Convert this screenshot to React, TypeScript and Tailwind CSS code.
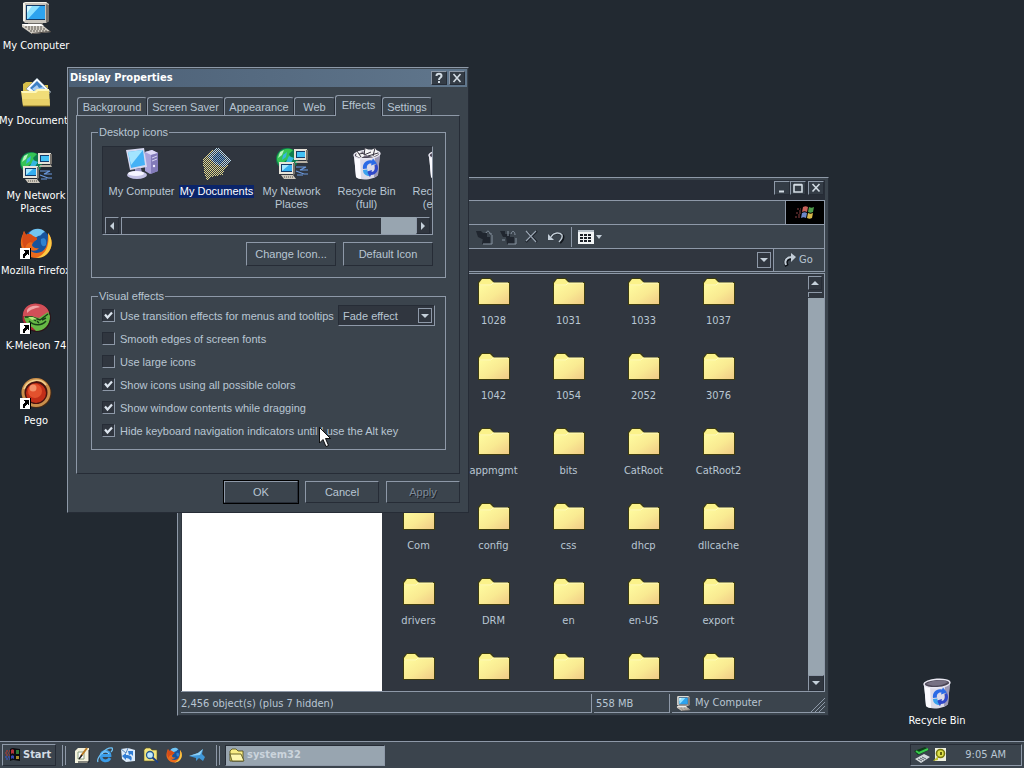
import type { ReactNode } from "react";

const tahoma = "font-['DejaVu_Sans_Condensed','DejaVu_Sans',sans-serif]";
const sans = "font-['Liberation_Sans',Arial,sans-serif]";
const raised = "border border-t-[#8e99a8] border-l-[#8e99a8] border-r-[#262c36] border-b-[#262c36]";
const sunken = "border border-t-[#262c36] border-l-[#262c36] border-r-[#8e99a8] border-b-[#8e99a8]";

type IconProps = { className?: string };

function ComputerIcon({ className = "size-8" }: IconProps) {
  return (
    <svg viewBox="0 0 32 32" className={className} aria-hidden="true">
      <path d="M3 1 L6 0 H26 L29 2 V19 L26 21 H5 L3 19Z" fill="#c9c5bd" />
      <path d="M3 1 L6 0 H26 L27 1 H5 V19 L3 19Z" fill="#f4f2ea" />
      <path d="M26 2 L29 3 V19 L26 21Z" fill="#77726c" />
      <rect x="6" y="3" width="19" height="15" fill="#123a66" />
      <rect x="7" y="4" width="18" height="13" fill="#2da3ee" />
      <path d="M7 4 H20 L8 17 H7Z" fill="#8ce0ff" />
      <path d="M7 4 H12 L7 11Z" fill="#d4f7ff" />
      <path d="M8 21 H23 V24 H8Z" fill="#6d6a66" />
      <path d="M2 22 H21 L31 30 L12 32 L2 25Z" fill="#d2cdc4" />
      <path d="M2 22 H21 L24 24 H5Z" fill="#fff" />
      <path d="M5 25 H22 M8 27 H25 M10 29 H28" stroke="#59544f" strokeWidth="1" strokeDasharray="2 1" />
      <path d="M12 31 L31 29 V30 L12 32Z" fill="#4b4642" />
    </svg>
  );
}

function TowerComputerIcon() {
  return (
    <svg viewBox="0 0 32 32" className="size-8" aria-hidden="true">
      <path d="M19 4 L26 2 L32 5 V23 L24 26 L19 23Z" fill="#a9a2da" />
      <path d="M19 4 L26 2 L32 5 L25 7Z" fill="#dedaf7" />
      <path d="M25 7 L32 5 V23 L25 26Z" fill="#827bb9" />
      <path d="M26 10 L31 8 M26 13 L31 11" stroke="#d8d5f4" />
      <circle cx="28" cy="18" r="1.2" fill="#efedff" />
      <path d="M0 2 L18 0 L21 19 L4 22Z" fill="#d7d9f1" />
      <path d="M2 4 L17 2 L19 17 L5 20Z" fill="#45b1f5" />
      <path d="M2 4 L17 2 L5 17Z" fill="#a4e4ff" />
      <path d="M9 21 L15 20 L16 25 H9Z" fill="#9c99c8" />
      <ellipse cx="11" cy="27" rx="10" ry="4" fill="#c3c2e4" />
      <ellipse cx="10" cy="25.5" rx="8" ry="2.6" fill="#f5f5ff" />
    </svg>
  );
}

function DocumentsIcon() {
  return (
    <svg viewBox="0 0 32 32" className="size-8" aria-hidden="true">
      <path d="M3 10 V7 L6 5 H12 L14 8 H28 V14 H3Z" fill="#d8bf4a" />
      <path d="M17 1 L31 15 L22 23 L6 12Z" fill="#f6fbff" stroke="#6c7c8c" strokeWidth="0.6" />
      <path d="M17 4 L26 13 L20 19 L10 11Z" fill="#3b7fc4" />
      <path d="M12 12 L17 8 L19 11 L23 10 L25 14 L20 18Z" fill="#a9cdf0" />
      <path d="M31 15 L28 18 V14Z" fill="#5a6470" />
      <path d="M1 14 H15 L17 12 H29 L30 29 H3Z" fill="#f1dd78" />
      <path d="M1 14 H15 L17 12 H29 V14 H18 L16 16 H2Z" fill="#fff8b8" />
      <path d="M3 29 L2 22 H30 L29 29Z" fill="#e5c95e" opacity=".6" />
      <path d="M3 29 H30" stroke="#8b7424" />
    </svg>
  );
}

function SelectedDocumentsIcon() {
  return (
    <svg viewBox="0 0 32 32" className="size-8" shapeRendering="crispEdges" aria-hidden="true">
      <defs>
        <pattern id="halftone" width="2" height="2" patternUnits="userSpaceOnUse">
          <rect width="1" height="1" fill="#2c3744" />
          <rect x="1" y="1" width="1" height="1" fill="#2c3744" />
        </pattern>
      </defs>
      <path d="M2 12 L9 4 L15 0 H19 L25 8 L30 13 L24 21 L22 27 L13 28 L6 32 L3 24Z" fill="#e2d488" />
      <path d="M6 9 L15 0 H19 L25 8 L30 13 L24 20 L14 16Z" fill="#bcd6e4" />
      <path d="M11 9 L17 4 L24 11 L19 16 L13 13Z" fill="#6aa2dc" />
      <path d="M2 12 L9 4 L15 0 H19 L25 8 L30 13 L24 21 L22 27 L13 28 L6 32 L3 24Z" fill="url(#halftone)" />
    </svg>
  );
}

function NetworkIcon() {
  return (
    <svg viewBox="0 0 32 32" className="size-8" aria-hidden="true">
      <circle cx="11" cy="11" r="11" fill="#0d7c4e" />
      <path d="M3 5 C7 0 13 0 17 2 L13 6 L15 10 L9 13 L5 18 C0 14 0 9 3 5Z" fill="#35c455" />
      <path d="M7 7 L11 4 L10 9 L6 12Z M13 8 L18 10 L14 16 L10 14Z" fill="#35b7df" />
      <path d="M4 4 L8 2 L6 7 L2 10Z" fill="#b8f3c0" />
      <rect x="18" y="1" width="13" height="11" fill="#e6e2d8" />
      <path d="M30 2 H32 V12 L30 13Z" fill="#77726c" />
      <rect x="20" y="3" width="9" height="7" fill="#143b6a" />
      <rect x="21" y="4" width="8" height="5" fill="#42c1f5" />
      <path d="M20 13 H31 L32 15 H19Z" fill="#bab3a6" />
      <rect x="3" y="14" width="15" height="12" fill="#e9e5da" />
      <path d="M17 15 H19 V26 L17 27Z" fill="#77726c" />
      <rect x="5" y="16" width="11" height="8" fill="#143b6a" />
      <rect x="6" y="17" width="10" height="6" fill="#35aef0" />
      <path d="M6 17 H13 L6 23Z" fill="#a4e8ff" />
      <path d="M5 27 H17 L20 31 H8Z" fill="#cdc7bc" />
      <path d="M8 29 H18" stroke="#55504b" strokeDasharray="1 1" />
      <path d="M20 19 H30 L24 22 H32 M20 23 L28 26 H32 M21 27 H27" fill="none" stroke="#6b9ae0" strokeWidth="1.2" />
    </svg>
  );
}

function RecycleBinIcon({ full = false }: { full?: boolean }) {
  return (
    <svg viewBox="0 0 32 32" className="size-8" aria-hidden="true">
      <path d="M3 7 L29 5 L27 27 C23 32 9 33 5 29Z" fill="#dcdbe8" />
      <path d="M3 7 L9 9 L10 31 C8 31 6 30 5 29Z" fill="#fbfbff" />
      <path d="M24 8 L29 5 L27 27 L23 30Z" fill="#9c98b4" />
      <ellipse cx="16" cy="6.5" rx="13" ry="4.2" fill="#4c4757" stroke="#e9e8f2" strokeWidth="1.4" transform="rotate(-4 16 6.5)" />
      <path d="M5 7 C11 3 21 2 27 5 C22 9 12 10 5 7Z" fill="#777183" />
      {full && (
        <>
          <path d="M5 8 L6 3 L12 5 L14 0 L19 3 L24 0 L28 6 L22 9 L15 7 L10 10Z" fill="#f5f5f5" />
          <path d="M6 3 L10 9 M14 0 L13 7 L20 4 M24 0 L22 8 M8 6 L14 5 M17 8 L27 5" fill="none" stroke="#37333f" />
        </>
      )}
      <path d="M12 21 C11 15 16 11 21 12.5 L22 10.5 L26 15.5 L20 17.5 L20.5 15.5 C17 15 15.5 17.5 16 20.5Z" fill="#2b6be6" />
      <path d="M26 16 C29 22 25 27 20 27 L19 29 L14.5 24 L21 22 L20.5 24 C23 24 25 21 23.5 17.5Z" fill="#3048c8" />
      <path d="M12 22 L16.5 21.5 C16 24 17 26 18.5 28 C14.5 28 12 25.5 12 22Z" fill="#3ba3ee" />
    </svg>
  );
}

function FirefoxIcon({ className = "size-8" }: IconProps) {
  return (
    <svg viewBox="0 0 32 32" className={className} aria-hidden="true">
      <circle cx="17" cy="15" r="13" fill="#17539d" />
      <path d="M9 6 C13 1 21 0 25 5 C22 5 22 9 18 9 C15 12 11 10 9 6Z" fill="#72c4f2" />
      <path d="M21 12 C25 10 27 13 26 18 C23 21 20 18 21 12Z" fill="#2e82d0" />
      <path d="M28 6 C33 12 33 21 27 27 C20 33 9 32 4 25 C0 20 0 13 3 7 L4 4 L6 8 C9 6 11 7 13 9 L17 11 C17 14 14 13 13 16 C10 19 15 22 19 21 C16 25 11 24 9 22 C13 28 23 27 26 20 C28 15 28 10 28 6Z" fill="#ea6a1c" />
      <path d="M28 6 C33 12 33 21 27 27 C24 30 20 31 16 31 C26 28 30 18 28 6Z" fill="#fbcb45" />
      <path d="M4 4 L6 8 C9 6 11 7 13 9 L17 11 C17 14 14 13 13 16 C10 14 6 17 5 22 C1 15 2 9 4 4Z" fill="#d54c18" />
    </svg>
  );
}

function KMeleonIcon() {
  return (
    <svg viewBox="0 0 32 32" className="size-8" aria-hidden="true">
      <circle cx="17" cy="16" r="14" fill="#2b1418" />
      <circle cx="16" cy="15" r="13.5" fill="#a92835" />
      <path d="M3 14 C3 5 10 1 17 2 C24 2 29 7 29 11 L20 16Z" fill="#d14f58" />
      <path d="M7 8 C10 3 17 3 20 5 C16 6 11 7 7 11Z" fill="#f0a3a5" />
      <path d="M4 15 L11 14 L19 16 L28 10 L30 14 C30 23 24 29 16 29 L12 25 C8 24 5 20 4 15Z" fill="#67b845" />
      <path d="M5 15 L12 15 L20 18 L28 12 M9 19 C14 24 22 24 26 19 M17 19 L19 21 M13 17 L16 19 M22 18 L26 16" fill="none" stroke="#173d18" strokeWidth="1.4" />
      <path d="M8 15 L13 15 L17 17 L12 18Z" fill="#b6e879" />
    </svg>
  );
}

function PegoIcon() {
  return (
    <svg viewBox="0 0 32 32" className="size-8" aria-hidden="true">
      <circle cx="16.5" cy="16" r="15" fill="#4a2a14" />
      <circle cx="16" cy="15.5" r="13" fill="#471310" stroke="#c98f4c" strokeWidth="3" />
      <path d="M4 12 C7 3 20 0 26 8" fill="none" stroke="#f2cf8d" strokeWidth="1.6" />
      <circle cx="16" cy="16" r="10" fill="#c22f18" />
      <circle cx="15" cy="14" r="7" fill="#e3512d" />
      <circle cx="13" cy="11" r="3.5" fill="#f39068" />
    </svg>
  );
}

function ShortcutArrow() {
  return (
    <svg viewBox="0 0 11 11" className="absolute bottom-0 left-0 size-[11px]" shapeRendering="crispEdges" aria-hidden="true">
      <rect width="11" height="11" fill="#000" />
      <rect width="10" height="11" fill="#fff" />
      <path d="M3 2 H9 V7 H8 L7 6 L5 8 V10 H3 V7 L5 4Z" fill="#000" />
    </svg>
  );
}

function FolderIcon() {
  return (
    <svg viewBox="0 0 34 32" className="h-8 w-[34px]" aria-hidden="true">
      <defs>
        <linearGradient id="folder" x1="0" y1="0" x2="1" y2="1">
          <stop offset="0" stopColor="#fffda0" />
          <stop offset=".55" stopColor="#f9ea92" />
          <stop offset="1" stopColor="#f0ca86" />
        </linearGradient>
      </defs>
      <path d="M1 6 L5 2 H14 L17 6 H33 V29 H1Z" fill="#3d3c10" />
      <path d="M2 7 L5 3 H13 L17 7 H32 V10 H2Z" fill="#fbf28a" />
      <path d="M2 10 H14 L16 7 H32 V28 H2Z" fill="url(#folder)" />
      <path d="M3 9 H14 L16 7 H31" stroke="#fffbc4" fill="none" />
    </svg>
  );
}

function WindowsFlag({ className }: IconProps) {
  return (
    <svg viewBox="0 0 20 16" className={className} aria-hidden="true">
      <path d="M8 2 C10 1 11 1 13 2 L12 7 C10 6 9 6 7 7Z" fill="#c8625a" />
      <path d="M14 2 C16 3 17 3 19 2 L18 7 C16 8 15 8 13 7Z" fill="#4f9e4c" />
      <path d="M7 8 C9 7 10 7 12 8 L11 13 C9 12 8 12 6 13Z" fill="#6c86c8" />
      <path d="M13 8 C15 9 16 9 18 8 L17 13 C15 14 14 14 12 13Z" fill="#d8b84a" />
      <path d="M2 4 H6 M4 6 H7 M1 8 H6 M3 10 H6 M0 12 H5" stroke="#8a4142" strokeDasharray="2 1" />
    </svg>
  );
}

function Arrow({ direction }: { direction: "up" | "down" | "left" | "right" }) {
  const paths = { up: "M0 6 L4 2 L8 6Z", down: "M0 2 H8 L4 6Z", left: "M6 0 V8 L2 4Z", right: "M2 0 L6 4 L2 8Z" };
  return (
    <svg viewBox="0 0 8 8" className="size-2" aria-hidden="true">
      <path d={paths[direction]} fill="#c5d0da" />
    </svg>
  );
}

function CaptionButton({ label, children }: { label: string; children: ReactNode }) {
  return (
    <button aria-label={label} className={`flex h-[14px] w-4 items-center justify-center ${raised} bg-[#343c46]`}>
      <svg viewBox="0 0 12 12" className="size-3" fill="none" stroke="#d3dce4" strokeWidth="1.6" aria-hidden="true">
        {children}
      </svg>
    </button>
  );
}

function DesktopIcon({ label, icon, shortcut, nowrap = true }: { label: string; icon: ReactNode; shortcut?: boolean; nowrap?: boolean }) {
  return (
    <button className="flex h-[75px] w-[72px] flex-col items-center gap-[5px] pt-[2px] text-white">
      <span className="relative block size-8">
        {icon}
        {shortcut && <ShortcutArrow />}
      </span>
      <span className={`leading-[13px] ${nowrap ? "whitespace-nowrap" : ""}`}>{label}</span>
    </button>
  );
}

const folderRows: (string | null)[][] = [
  [null, "1028", "1031", "1033", "1037"],
  [null, "1042", "1054", "2052", "3076"],
  [null, "appmgmt", "bits", "CatRoot", "CatRoot2"],
  ["Com", "config", "css", "dhcp", "dllcache"],
  ["drivers", "DRM", "en", "en-US", "export"],
  ["hotfix", "ras", "inetsrv", "mui", "npp"],
];

function Explorer() {
  return (
    <section aria-label="system32" className={`absolute top-[177px] left-[177px] w-[652px] ${raised} bg-[#3b444d] px-[3px] pt-[2px] pb-[2px] text-[#b9c6d3]`}>
      <div className="flex h-5 items-center justify-end bg-[#282e38] pr-px pb-1">
        <CaptionButton label="Minimize"><path d="M3 9.5 H8" strokeWidth="2" /></CaptionButton>
        <CaptionButton label="Maximize"><path d="M2 3 H10 V10 H2Z M2 2.5 H10" /></CaptionButton>
        <span className="w-[2px]" />
        <CaptionButton label="Close"><path d="M2.5 2 L9.5 9.5 M9.5 2 L2.5 9.5" /></CaptionButton>
      </div>
      <div className="border-r border-[#8e99a8]">
        <div className="flex h-6 justify-end border-t border-[#8e99a8]">
          <div className="flex w-[39px] items-center justify-center border-l border-[#8e99a8] bg-black">
            <WindowsFlag className="h-4 w-5" />
          </div>
        </div>
        <div className="flex h-6 items-center gap-[6px] border-t border-[#8e99a8] pl-[294px]">
          <button aria-label="Move to">
            <svg viewBox="0 0 18 18" className="size-[18px]" aria-hidden="true">
              <path d="M1 3 H6 L8 5 H12 V11 H7 L3 9Z M8 9 H15 V16 H7Z" fill="#20262f" />
              <path d="M11 5 C12 2 15 3 15 6 L17 6 M17 7 V16 H8" fill="none" stroke="#8793a1" />
            </svg>
          </button>
          <button aria-label="Copy to">
            <svg viewBox="0 0 18 18" className="size-[18px]" aria-hidden="true">
              <path d="M1 3 H6 V6 H11 V9 H4Z M7 9 H15 V16 H8Z" fill="#20262f" />
              <path d="M9 3 V8 M12 6 C13 2 16 3 16 7 M3 12 H6 M17 10 V16 H9" fill="none" stroke="#8793a1" />
            </svg>
          </button>
          <button aria-label="Delete">
            <svg viewBox="0 0 18 18" className="size-[18px]" fill="none" aria-hidden="true">
              <path d="M4 4 L14 14 M14 3 L3 14" stroke="#1c2129" strokeWidth="2.2" />
              <path d="M3 3 L13 14 M13 3 L3 13" stroke="#9aa6b3" strokeWidth="1.2" />
            </svg>
          </button>
          <button aria-label="Undo">
            <svg viewBox="0 0 18 18" className="size-[18px]" fill="none" aria-hidden="true">
              <path d="M4 9 C7 4 14 4 16 8 C17 11 15 13 13 15" stroke="#11161c" strokeWidth="2.4" />
              <path d="M4 9 C7 4 13 4 15 7 C16 10 14 12 12 14" stroke="#c3ced8" strokeWidth="1.4" />
              <path d="M1 6 V12 H7Z" fill="#c3ced8" />
            </svg>
          </button>
          <span className="h-5 w-px bg-[#8e99a8]" />
          <button aria-label="Views" className="flex items-center gap-[2px]">
            <svg viewBox="0 0 16 14" className="h-[14px] w-4" shapeRendering="crispEdges" aria-hidden="true">
              <rect width="16" height="14" fill="#f1f4f6" />
              <rect width="16" height="2" fill="#b6c0ca" />
              <path d="M2 5 H14 M2 8 H14 M2 11 H14" stroke="#1b2028" strokeWidth="2" strokeDasharray="3 1" />
            </svg>
            <svg viewBox="0 0 6 4" className="h-1 w-[6px]" aria-hidden="true"><path d="M0 0 H6 L3 4Z" fill="#c5d0da" /></svg>
          </button>
        </div>
        <div className="flex h-6 border-y border-[#8e99a8]">
          <div className="flex flex-1 items-center border-r border-[#8e99a8] bg-[#30363f] pr-[2px]">
            <input aria-label="Address" className="h-full min-w-0 flex-1 bg-transparent" />
            <button aria-label="Show addresses" className="flex h-4 w-[14px] items-center justify-center border border-[#8e99a8]"><Arrow direction="down" /></button>
          </div>
          <button className="flex w-[50px] items-center gap-[2px] pl-[9px]">
            <svg viewBox="0 0 14 14" className="size-[14px]" fill="none" aria-hidden="true">
              <path d="M4 13 C1 8 4 5 9 5" stroke="#0d1116" strokeWidth="4" />
              <path d="M3 12 C1 7 4 4 9 4" stroke="#c3ced8" strokeWidth="2" />
              <path d="M8 0 L13 4 L8 9Z" fill="#c3ced8" />
            </svg>
            Go
          </button>
        </div>
      </div>
      <div className="mt-px flex h-[419px] overflow-hidden border-r border-y border-[#8e99a8] bg-[#30363f]">
        <div className="ml-px w-[200px] bg-white" />
        <div className="grid flex-1 auto-rows-[75px] grid-cols-[repeat(5,75px)]">
          {folderRows.flat().map((name, index) =>
            name ? (
              <button key={index} className="flex flex-col items-center gap-[6px] pt-[2px] pr-[2px]">
                <FolderIcon />
                <span className="leading-[14px]">{name}</span>
              </button>
            ) : (
              <span key={index} />
            ),
          )}
        </div>
        <div className="flex w-4 flex-col bg-[#98a5b0]">
          <div className="bg-[#30363f] pt-[2px] pb-px">
            <button aria-label="Scroll up" className={`flex h-[14px] w-[14px] items-center justify-center ${raised}`}><Arrow direction="up" /></button>
            <div className="mt-[2px] h-[5px] w-[14px] border-t border-l border-[#8e99a8]" />
          </div>
          <div className="flex-1" />
          <button aria-label="Scroll down" className={`flex h-4 w-4 items-center justify-center ${raised} bg-[#30363f]`}><Arrow direction="down" /></button>
        </div>
      </div>
      <div className="flex h-[21px] items-stretch gap-[2px] pt-[2px] leading-5">
        <div className="flex-1 border-r border-b border-[#8e99a8]">2,456 object(s) (plus 7 hidden)</div>
        <div className="w-[76px] border-r border-b border-[#8e99a8] pl-[2px]">558 MB</div>
        <div className="flex w-[153px] items-center gap-1 border-b border-[#8e99a8] pl-1">
          <ComputerIcon className="size-[15px]" />
          <span className="flex-1">My Computer</span>
          <svg viewBox="0 0 14 16" className="h-4 w-[14px] self-end" stroke="#8e99a8" aria-hidden="true"><path d="M0 16 L14 2 M4 16 L14 6 M8 16 L14 10" /></svg>
        </div>
      </div>
    </section>
  );
}

const tabs = [
  { label: "Background", size: "w-[70px]" },
  { label: "Screen Saver", size: "w-[77px]" },
  { label: "Appearance", size: "w-[70px]" },
  { label: "Web", size: "w-[41px]" },
  { label: "Effects", size: "w-[47px]" },
  { label: "Settings", size: "w-[50px]" },
];

const listIcons = [
  { label: "My Computer", icon: <TowerComputerIcon /> },
  { label: "My Documents", icon: <SelectedDocumentsIcon />, selected: true },
  { label: "My Network Places", icon: <NetworkIcon /> },
  { label: "Recycle Bin (full)", icon: <RecycleBinIcon full /> },
  { label: "Recycle Bin (empty)", icon: <RecycleBinIcon /> },
];

const options = [
  { label: "Use transition effects for menus and tooltips", checked: true, effect: true },
  { label: "Smooth edges of screen fonts", checked: false },
  { label: "Use large icons", checked: false },
  { label: "Show icons using all possible colors", checked: true },
  { label: "Show window contents while dragging", checked: true },
  { label: "Hide keyboard navigation indicators until I use the Alt key", checked: true },
];

function Option({ label, checked }: { label: string; checked: boolean }) {
  return (
    <label className="flex items-center gap-[5px] whitespace-nowrap">
      <span className="grid size-[13px] *:col-start-1 *:row-start-1">
        <input type="checkbox" defaultChecked={checked} className={`peer size-[13px] appearance-none ${sunken} bg-[#30363f]`} />
        <svg viewBox="0 0 13 13" className="pointer-events-none invisible size-[13px] peer-checked:visible" fill="none" stroke="#dce5ee" strokeWidth="2.2" aria-hidden="true">
          <path d="M3 5.5 L5.5 8.5 L10 3.5" />
        </svg>
      </span>
      {label}
    </label>
  );
}

function DisplayProperties() {
  return (
    <section aria-label="Display Properties" className={`absolute top-[67px] left-[67px] w-[402px] ${raised} bg-[#3b444d] p-px text-[#b9c6d3] ${sans}`}>
      <div className={`flex h-[18px] items-center bg-linear-to-r from-[#4c6076] to-[#60768c] pr-[2px] pl-px text-white ${tahoma}`}>
        <h1 className="flex-1 font-bold">Display Properties</h1>
        <CaptionButton label="Help"><path d="M3.5 4 C3.5 1 8.5 1 8.5 4 C8.5 5.5 6 5.5 6 8 M6 9 V11" strokeWidth="2" /></CaptionButton>
        <span className="w-[2px]" />
        <CaptionButton label="Close"><path d="M2.5 2 L9.5 10 M9.5 2 L2.5 10" /></CaptionButton>
      </div>
      <div className="px-[7px] pt-2 pb-2">
        <div role="tablist" className="flex h-5 items-end pl-px">
          {tabs.map(({ label, size }) => {
            const active = label === "Effects";
            return (
              <button
                key={label}
                role="tab"
                aria-selected={active}
                className={`${size} rounded-t-[3px] border-t border-r border-l border-t-[#8e99a8] border-r-[#262c36] border-l-[#8e99a8] ${active ? "relative -mb-px h-[21px] bg-[#3b444d] pb-[2px]" : "h-[18px]"}`}
              >
                {label}
              </button>
            );
          })}
        </div>
        <div role="tabpanel" className={`${raised} pt-[9px] pr-[13px] pb-[23px] pl-[14px]`}>
          <fieldset className="min-w-0 border border-[#8e99a8] pr-3 pb-[11px] pl-[10px]">
            <legend className="-ml-1 px-px leading-[14px]">Desktop icons</legend>
            <div className={`mt-[7px] ${sunken} bg-[#30363f]`}>
              <div className="flex h-[70px] overflow-hidden pl-px">
                {listIcons.map(({ label, icon, selected }) => (
                  <div key={label} className="flex w-[75px] shrink-0 flex-col items-center gap-[5px] pt-px text-center leading-[13px]">
                    {icon}
                    <span className={selected ? "bg-[#0a246a] px-px whitespace-nowrap text-white" : label === "My Computer" ? "whitespace-nowrap" : "px-2"}>{label}</span>
                  </div>
                ))}
              </div>
              <div className="flex h-[17px] items-stretch px-[2px]">
                <button aria-label="Scroll left" className={`flex w-[14px] items-center justify-center ${raised}`}><Arrow direction="left" /></button>
                <div className="ml-[2px] flex-1 border-t border-l border-[#8e99a8]" />
                <div className="w-[35px] bg-[#98a5b0]" />
                <button aria-label="Scroll right" className={`flex w-[14px] items-center justify-center ${raised}`}><Arrow direction="right" /></button>
              </div>
            </div>
            <div className="mt-[7px] flex justify-end gap-[7px]">
              <button className={`h-6 w-[90px] ${raised}`}>Change Icon...</button>
              <button className={`h-6 w-[90px] ${raised}`}>Default Icon</button>
            </div>
          </fieldset>
          <fieldset className="mt-[11px] min-w-0 border border-[#8e99a8] px-[10px] pb-[7px]">
            <legend className="-ml-1 px-px leading-[14px]">Visual effects</legend>
            <div className="pt-px">
              {options.map(({ label, checked, effect }) => (
                <div key={label} className="flex h-[23px] items-center justify-between">
                  <Option label={label} checked={checked} />
                  {effect && (
                    <div className="grid h-[21px] w-[97px] *:col-start-1 *:row-start-1">
                      <select aria-label="Transition effect" className={`appearance-none ${sunken} bg-[#30363f] pl-1`}>
                        <option>Fade effect</option>
                      </select>
                      <span className="pointer-events-none mr-[3px] flex h-[15px] w-[14px] items-center justify-center self-center justify-self-end border border-[#8e99a8]">
                        <Arrow direction="down" />
                      </span>
                    </div>
                  )}
                </div>
              ))}
            </div>
          </fieldset>
        </div>
        <div className="mt-[7px] flex justify-end gap-[7px]">
          <button className={`h-[22px] w-[74px] ${raised} outline outline-black`}>OK</button>
          <button className={`h-[22px] w-[74px] ${raised}`}>Cancel</button>
          <button disabled className={`h-[22px] w-[74px] ${raised} text-[#7f8b99] [text-shadow:1px_1px_#1c2129]`}>Apply</button>
        </div>
      </div>
    </section>
  );
}

function PadIcon() {
  return (
    <svg viewBox="0 0 16 16" className="size-4" aria-hidden="true">
      <path d="M1 4 L4 1 H15 V14 L13 16 H1Z" fill="#f3f1dc" />
      <path d="M15 3 V15 H4" fill="none" stroke="#171b20" />
      <path d="M4 5 H10 V12 H4Z" fill="#fff" stroke="#8aa080" />
      <path d="M7 9 L13 1" stroke="#b77a24" strokeWidth="2" />
      <path d="M5 12 L8 8" stroke="#1d1d1d" strokeWidth="1.4" />
    </svg>
  );
}

function ExplorerIcon() {
  return (
    <svg viewBox="0 0 16 16" className="size-4" fill="none" aria-hidden="true">
      <path d="M13 11 C11 15 4 15 4 9 C4 3 13 3 13 8.5 H5" stroke="#3a9ce8" strokeWidth="2.8" />
      <path d="M5 7 C6 4 11 4 12 7" stroke="#a5dcff" />
      <path d="M1 15 C-1 11 9 0 15 1 C16 2 15 4 14 5" stroke="#6cc0f5" strokeWidth="1.3" />
    </svg>
  );
}

function MailIcon() {
  return (
    <svg viewBox="0 0 16 16" className="size-4" aria-hidden="true">
      <path d="M1 2 L8 1 L15 3 V14 L6 15 L2 12Z" fill="#dcebfa" />
      <path d="M1 2 L6 6 L8 1" fill="none" stroke="#5c88b8" />
      <path d="M2 9 L6 6 V8 C11 8 13 10 11 14 C10 12 8 11 6 11 V13Z" fill="#2f7cd4" />
      <path d="M8 4 H13 V9 L11 7 L9 8Z" fill="#2f7cd4" />
    </svg>
  );
}

function SearchIcon() {
  return (
    <svg viewBox="0 0 16 16" className="size-4" aria-hidden="true">
      <path d="M1 3 L3 1 H7 L9 3 H14 V14 H1Z" fill="#f4e67f" stroke="#5f5718" strokeWidth=".6" />
      <circle cx="7" cy="8" r="3.5" fill="#bfe9ff" stroke="#24598f" strokeWidth="1.3" />
      <path d="M9.5 10.5 L15 15.5" stroke="#1c3f86" strokeWidth="2" />
    </svg>
  );
}

function PlaneIcon() {
  return (
    <svg viewBox="0 0 16 16" className="size-4" aria-hidden="true">
      <path d="M0 9 L9 6 L14 2 L13 7 L16 10 L14 14 L10 11 L7 14 L7 11Z" fill="#3f97d8" />
      <path d="M0 9 L9 6 L14 2 L11 8Z" fill="#8fd0f5" />
    </svg>
  );
}

const quickLaunch = [
  { label: "Show Desktop", icon: <PadIcon /> },
  { label: "Internet Explorer", icon: <ExplorerIcon /> },
  { label: "Outlook Express", icon: <MailIcon /> },
  { label: "Search", icon: <SearchIcon /> },
  { label: "Mozilla Firefox", icon: <FirefoxIcon className="size-4" /> },
  { label: "Messenger", icon: <PlaneIcon /> },
];

function Grip() {
  return (
    <span className="flex h-[21px] gap-[2px]">
      <span className="w-px bg-[#8e99a8]" />
      <span className="my-px w-[2px] border-l border-[#8e99a8]" />
    </span>
  );
}

function Taskbar() {
  return (
    <footer className="flex h-[27px] items-center border-t border-[#8e99a8] bg-[#3b444d] px-[2px] text-[#b9c6d3]">
      <button className={`flex h-[22px] w-[54px] items-center gap-[2px] pl-[2px] ${raised} text-[#d3dce4]`}>
        <svg viewBox="0 0 16 16" className="size-4" aria-hidden="true">
          <path d="M5 2 C8 0 11 2 15 2 V14 C11 14 9 12 5 14Z" fill="#0b0d10" />
          <path d="M6 3 C7 2 8 2 9 3 V7 C8 6 7 6 6 7Z" fill="#b3343c" />
          <path d="M11 3 L14 3 V7 L11 7Z" fill="#2f7a36" />
          <path d="M6 9 C7 8 8 8 9 9 V12 C8 11 7 11 6 12Z" fill="#3748b6" />
          <path d="M11 9 H14 V12 L11 12Z" fill="#a98b30" />
          <path d="M1 4 H5 M0 6 H4 M1 8 H5" stroke="#c03a35" strokeDasharray="2 1" />
          <path d="M0 10 H5 M1 12 H5" stroke="#3c59d8" strokeDasharray="2 1" />
        </svg>
        <span className="font-bold">Start</span>
      </button>
      <div className="ml-[6px] flex items-center">
        <Grip />
        <nav aria-label="Quick Launch" className="ml-[7px] flex gap-[7px]">
          {quickLaunch.map(({ label, icon }) => (
            <button key={label} aria-label={label}>{icon}</button>
          ))}
        </nav>
      </div>
      <div className="ml-[11px] flex items-center">
        <Grip />
        <button className={`ml-1 flex h-[21px] w-[160px] items-center gap-[2px] bg-[#98a5b0] pl-[3px] font-bold text-[#cbd4dc] ${sunken}`}>
          <svg viewBox="0 0 16 14" className="h-[14px] w-4" aria-hidden="true">
            <path d="M1 3 L3 1 H7 L9 3 H14 V13 H1Z" fill="#f7ec86" stroke="#4d480f" strokeWidth=".8" />
            <path d="M1 6 H12 L15 13 H3Z" fill="#fdf7b0" stroke="#4d480f" strokeWidth=".8" />
          </svg>
          system32
        </button>
      </div>
      <div className={`ml-auto flex h-[22px] w-[112px] items-center gap-[2px] pl-[3px] ${sunken}`}>
        <svg viewBox="0 0 16 16" className="size-4" aria-hidden="true">
          <path d="M0 4 L11 0 L15 3 L4 8Z" fill="#0d3d19" />
          <path d="M2 4 L5 6 L14 2" fill="none" stroke="#38c94b" strokeWidth="2" />
          <path d="M1 12 L10 7 L16 10 L7 16Z" fill="#d5dadd" />
          <path d="M4 12 L8 14 M6 11 L10 13 M8 10 L12 12" stroke="#59636c" />
        </svg>
        <svg viewBox="0 0 16 16" className="size-4" aria-hidden="true">
          <path d="M3 1 H14 V14 H3Z" fill="#eef0df" />
          <circle cx="8.5" cy="6.5" r="4" fill="#dfe04a" stroke="#77780f" strokeWidth="1.6" />
          <path d="M8 5 H10 V8 H8Z" fill="#62630e" />
          <path d="M1 14 L6 9 V13Z" fill="#c2c42f" />
        </svg>
        <time className="ml-auto pr-[15px]">9:05 AM</time>
      </div>
    </footer>
  );
}

export default function App() {
  return (
    <div className={`flex min-h-screen flex-col overflow-hidden bg-[#222931] text-[11px] leading-[14px] ${tahoma}`}>
      <main className="relative flex-1">
        <div className="flex flex-col items-start">
          <DesktopIcon label="My Computer" icon={<ComputerIcon />} />
          <DesktopIcon label="My Documents" icon={<DocumentsIcon />} />
          <DesktopIcon label="My Network Places" icon={<NetworkIcon />} nowrap={false} />
          <DesktopIcon label="Mozilla Firefox" icon={<FirefoxIcon />} shortcut />
          <DesktopIcon label="K-Meleon 74" icon={<KMeleonIcon />} shortcut />
          <DesktopIcon label="Pego" icon={<PegoIcon />} shortcut />
        </div>
        <div className="absolute top-[675px] left-[901px]">
          <DesktopIcon label="Recycle Bin" icon={<RecycleBinIcon />} />
        </div>
        <Explorer />
        <DisplayProperties />
        <svg viewBox="0 0 12 20" className="pointer-events-none absolute top-[427px] left-[319px] h-5 w-3" aria-hidden="true">
          <path d="M0.5 0.5 V16 L4 12.5 L7 19.5 L9.5 18.5 L6.5 11.5 H11.5Z" fill="#fff" stroke="#000" strokeWidth=".9" />
        </svg>
      </main>
      <Taskbar />
    </div>
  );
}
